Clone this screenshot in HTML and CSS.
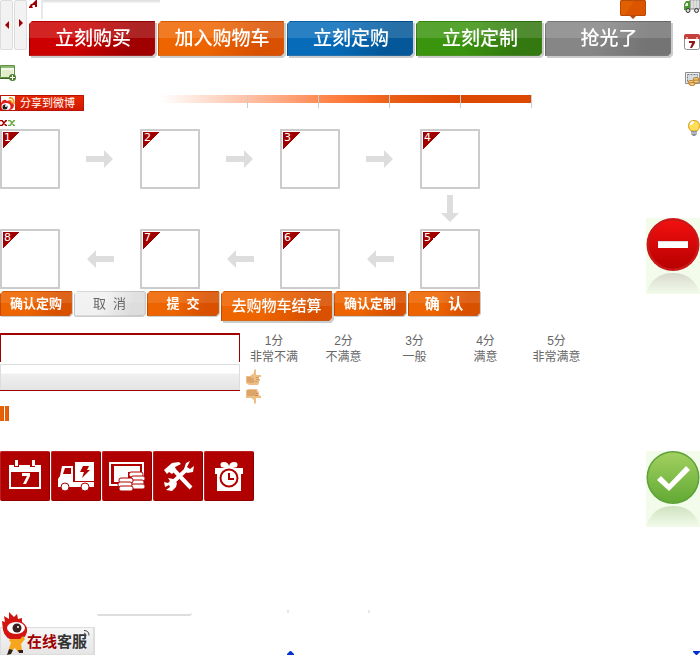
FILE: index.html
```html
<!DOCTYPE html>
<html lang="zh-CN">
<head>
<meta charset="utf-8">
<title>商城界面元素</title>
<link rel="stylesheet" href="styles.css">
</head>
<body>
<div class="page">
<main class="main">
  <header class="top">
    <div class="pager">
      <button class="page-btn" aria-label="上一页"><svg width="4" height="8"><path d="M4 0v8L0 4z" fill="#a00000"/></svg></button>
      <button class="page-btn next" aria-label="下一页"><svg width="4" height="8"><path d="M0 0v8l4-4z" fill="#a00000"/></svg></button>
    </div>
    <div class="top-body">
      <div class="strip">
        <svg class="flag" width="8" height="8"><path d="M8 0v7H6V5H4L3 6l1 2H0V7l2-3h1l4-4z" fill="#a00000"/></svg>
        <div class="corner"></div>
        <svg class="bubble" width="26" height="19"><path d="M1 0h24l1 1v14l-1 1h-9l-3 3-3-3H1l-1-1V1z" fill="#b94a08"/><path d="M1 1h24v14H1z" fill="#e06000"/><path d="M14 1h11v14H5z" fill="#dc5400"/></svg>
      </div>
      <div class="actions">
        <button class="btn big red">立刻购买</button>
        <button class="btn big orange">加入购物车</button>
        <button class="btn big blue">立刻定购</button>
        <button class="btn big green">立刻定制</button>
        <button class="btn big grey">抢光了</button>
      </div>
    </div>
  </header>

  <svg class="add" width="16" height="16"><path d="M.5.5h14v12H.5z" fill="#f4f8ea" stroke="#5f9140"/><path d="M1 1h13v2H1z" fill="#8cb878"/><path d="M2 5h11v7H2z" fill="#e3edcc"/><path d="M0 13.500h10" stroke="#3d6a25" stroke-width="1"/><circle cx="12.500" cy="12.500" r="3.500" fill="#4d7e2d"/><path d="M10 12.500h5M12.500 10v5" stroke="#fff" stroke-width="1"/></svg>

  <div class="share-row">
    <button class="share"><svg width="14" height="14"><path d="M0 0h14v14H0z" fill="#fff"/><path d="M0 7q2-4 5-3l1 1q4-2 5 1l2 3q0 5-6 5H0z" fill="#e02020"/><ellipse cx="5" cy="10.500" rx="4.500" ry="3.500" fill="#fff"/><circle cx="4" cy="11" r="2.500" fill="#1c1c1c"/><circle cx="5" cy="10" r="1" fill="#fff"/><path d="M8 2q5-1 5 6M8 4.500q3 0 3 3" fill="none" stroke="#f09a20" stroke-width="1.500"/></svg>分享到微博</button>
    <div class="scale"><i></i><i></i><i></i><i></i><i></i></div>
  </div>

  <div class="marks">
    <svg width="7" height="6"><path d="M0 .5h2L6 5.500h1M0 5.500h2L6 .5h1" fill="none" stroke="#a00000" stroke-width="1.500"/></svg>
    <svg width="7" height="6"><path d="M0 .5h2L6 5.500h1M0 5.500h2L6 .5h1" fill="none" stroke="#6aaa45" stroke-width="1.500"/></svg>
  </div>

  <div class="steps">
    <div class="step"><b>1</b></div><i class="arrow"></i>
    <div class="step"><b>2</b></div><i class="arrow"></i>
    <div class="step"><b>3</b></div><i class="arrow"></i>
    <div class="step"><b>4</b></div>
    <i class="arrow down"></i>
    <div class="step"><b>8</b></div><i class="arrow back"></i>
    <div class="step"><b>7</b></div><i class="arrow back"></i>
    <div class="step"><b>6</b></div><i class="arrow back"></i>
    <div class="step"><b>5</b></div>
  </div>

  <div class="forms">
    <button class="btn small orange">确认定购</button>
    <button class="btn small cancel">取&nbsp; 消</button>
    <button class="btn small orange">提&nbsp; 交</button>
    <button class="btn checkout orange">去购物车结算</button>
    <button class="btn small orange">确认定制</button>
    <button class="btn small confirm orange">确&nbsp; 认</button>
  </div>

  <section class="review">
    <div class="panels">
      <div class="panel-top"></div>
      <div class="panel-bottom"></div>
    </div>
    <div class="review-side">
      <div class="ratings">
        <span>1分<br>非常不满</span><span>2分<br>不满意</span><span>3分<br>一般</span><span>4分<br>满意</span><span>5分<br>非常满意</span>
      </div>
      <div class="thumbs">
        <svg width="16" height="16"><path d="M0 7h4l4-3V1l1-1 1 1v5h5v2h-2v2h1v2h-1v2l-1 2H3l-3-2z" fill="#edbf85"/><path d="M1 8h4l3 2v4H4l-3-1z" fill="#dca468"/><path d="M10 8.500h3M10 10.500h3M9 12.500h3" stroke="#cf9a5e"/></svg>
        <svg width="16" height="16"><path d="M0 1l3-1h8l1 2 1 2v2l2 1v2h-5v5l-1 1-1-1v-3L5 9H0z" fill="#edbf85"/><path d="M1 1h9l1 3-3 3H1z" fill="#dca468"/><path d="M10 4.500h2M9 6.500h3" stroke="#c48650"/></svg>
      </div>
    </div>
  </section>

  <div class="ends"><i></i><i></i></div>

  <div class="services">
    <div class="tile"><svg viewBox="0 0 50 50"><path d="M9 14h5v2h5v-2h11v2h5v-2h6v24H9zm2 7v15h28V21z" fill="#fff" fill-rule="evenodd"/><path d="M15 9h3v6h-3zM32 9h3v6h-3z" fill="#fff"/><path d="M22 22h8v3l-4 8h-3l4-8h-5z" fill="#fff"/></svg></div>
    <div class="tile"><svg viewBox="0 0 50 50"><path d="M24 11h19v19H24z" fill="#fff"/><path d="M11 15h11v16h21v5H7v-8l2-3z" fill="#fff"/><path d="M14 17h6v6h-8z" fill="#b00000"/><path d="M32 15h6l-2 4h3l-8 8 2-6h-4z" fill="#b00000"/><circle cx="14" cy="36" r="4" fill="#fff" stroke="#b00000"/><circle cx="34" cy="36" r="4" fill="#fff" stroke="#b00000"/></svg></div>
    <div class="tile"><svg viewBox="0 0 50 50"><path d="M7 11h35v24H7zm2 2v20h31V13z" fill="#fff" fill-rule="evenodd"/><path d="M12 15h26v6H26v6h-8v4h-6z" fill="#fff"/><g fill="#fff" stroke="#b00000"><rect x="27" y="21" width="14" height="5" rx="2"/><rect x="29" y="25" width="14" height="5" rx="2"/><rect x="28" y="29" width="14" height="5" rx="2"/><rect x="29" y="33" width="14" height="5" rx="2"/><rect x="17" y="27" width="14" height="5" rx="2"/><rect x="16" y="31" width="14" height="5" rx="2"/><rect x="17" y="35" width="14" height="5" rx="2"/></g></svg></div>
    <div class="tile"><svg viewBox="0 0 50 50"><path d="M20 18l18 19M34 18L17 34" stroke="#fff" stroke-width="4"/><path d="M11 19l8-7 7-1 2 2-6 3 1 3-4 4-3-2-2 2z" fill="#fff"/><path d="M37 10l-4 2-2 6 3 4 6-1 1-6-4 3-3-2zM11 31l4 1 2-2-2-3 5 1 4 4-1 4-4 4-6-1 4-3-1-2-4 2z" fill="#fff"/></svg></div>
    <div class="tile"><svg viewBox="0 0 50 50"><path d="M11 17h10l-4-1q-2-5 3-5 4 0 5 4 1-4 5-4 5 0 3 5l-4 1h10v6h-2v17H13V23h-2z" fill="#fff"/><circle cx="25" cy="27" r="8.500" fill="#fff" stroke="#b00000" stroke-width="2"/><path d="M25 22v6h5" fill="none" stroke="#b00000" stroke-width="2"/></svg></div>
  </div>

  <footer class="foot">
    <a class="chat" href="#">
      <svg class="mascot" width="30" height="43"><path d="M3 18L2 9l3 1-1-6 5 3 0-7 5 5 3-3 1 5 4-1 0 4q6 4 5 10-2 8-11 8-11 0-13-10z" fill="#d21510"/><ellipse cx="16" cy="16" rx="9" ry="6" fill="#fff"/><circle cx="17" cy="16" r="4.500" fill="#3a2020"/><circle cx="18" cy="15" r="1" fill="#fff"/><path d="M11 27h9l3-3 2 3-4 5 1 6-4 2-3-4-4 3-2-3 2-5-2-3z" fill="#f7a51c"/><path d="M9 37l4 1-2 4-4 1zM18 38h5v3h-4z" fill="#302018"/></svg>
      <span class="chat-label"><em>在线</em>客服</span>
      <svg class="signal" width="6" height="6"><path d="M0 .5q5 0 5 5M0 3q2 0 2 3" fill="none" stroke="#444"/></svg>
    </a>
    <div class="lip"></div>
    <div class="foot-mid"><i class="dot"></i><svg width="7" height="4"><path d="M3 0h1l3 3v1H0V3z" fill="#0033cc"/></svg></div>
    <i class="dot"></i>
    <svg class="drop" width="7" height="4"><path d="M0 0h7v1L4 4H3L0 1z" fill="#0033cc"/></svg>
  </footer>
</main>

<aside class="rail">
  <div class="rail-icons">
    <svg width="16" height="13"><path d="M6 0h10v9H6z" fill="#c9ccc9" stroke="#888"/><path d="M8 0v8M11 0v8M14 0v8" stroke="#f1f1f1"/><path d="M0 8V4l2-3h4v9H0z" fill="#4d9a30"/><path d="M2 3h2v3H1z" fill="#e7f4e5"/><circle cx="4" cy="10.500" r="2" fill="#ddd" stroke="#333"/><circle cx="12.500" cy="10.500" r="2" fill="#ddd" stroke="#333"/></svg>
    <svg width="16" height="16"><rect x=".5" y="1.500" width="15" height="14" rx="2" fill="#fff" stroke="#8b8f98"/><path d="M0 2q0-2 2-2h12q2 0 2 2v3H0z" fill="#c5403c"/><path d="M3 3v3M13 3v3" stroke="#fff"/><path d="M5 7h6v2l-3 5H6l2-5H5z" fill="#901818"/></svg>
    <svg width="16" height="15"><path d="M1.500 1.500h14v11h-14z" fill="#eee" stroke="#8d8d8d"/><path d="M3.500 3.500h10v7h-10z" fill="#d6dde2" stroke="#737d86" stroke-dasharray="2 1"/><g fill="#f5cf80" stroke="#bd8230"><ellipse cx="12" cy="8" rx="3" ry="1.500"/><ellipse cx="12" cy="10.500" rx="3" ry="1.500"/><ellipse cx="7" cy="11" rx="3" ry="1.500"/><ellipse cx="8" cy="13" rx="3" ry="1.500"/></g></svg>
    <svg class="bulb" width="12" height="16"><path d="M3 11Q0 8 .5 5.500Q1 .5 6 .5t5.500 5Q12 8 9 11z" fill="#ffdf55" stroke="#d69b25"/><path d="M3 5q0-3 3-3" fill="none" stroke="#fff" stroke-width="2"/><path d="M3 11h6v3l-2 2H5l-2-2z" fill="#8e9198"/><path d="M3 13h6" stroke="#ddd"/></svg>
  </div>
  <div class="status"><svg width="54" height="76"><defs><linearGradient id="r" x2="0" y2="1"><stop stop-color="#f21010"/><stop offset="1" stop-color="#b80000"/></linearGradient><linearGradient id="fade" x2="0" y2="1"><stop stop-color="#d8d9ce"/><stop offset="1" stop-color="#f3fceb"/></linearGradient></defs><path d="M0 76Q6 55 27 55t27 21z" fill="url(#fade)"/><circle cx="27" cy="26.500" r="26.500" fill="#c81818"/><circle cx="27" cy="26.500" r="24" fill="url(#r)"/><path d="M12 23h30v7H12z" fill="#fff"/><path d="M12 23.500h30" stroke="#ddd"/></svg></div>
  <div class="status ok"><svg width="54" height="76"><defs><linearGradient id="g" x2="0" y2="1"><stop stop-color="#a2d060"/><stop offset="1" stop-color="#62aa35"/></linearGradient><linearGradient id="fade2" x2="0" y2="1"><stop stop-color="#cee2bf"/><stop offset="1" stop-color="#f3fceb"/></linearGradient></defs><path d="M0 76Q6 55 27 55t27 21z" fill="url(#fade2)"/><circle cx="27" cy="26.500" r="26.500" fill="#5da138"/><circle cx="27" cy="26.500" r="25" fill="url(#g)"/><path d="M11 29l4-4 8 8 17-18 4 4-21 21z" fill="#fff"/></svg></div>
</aside>
</div>
</body>
</html>
```

FILE: styles.css
```css
* { box-sizing: border-box; }
body {
  margin: 0;
  background: #fff;
  font: 12px/16px "Liberation Sans", "Noto Sans CJK SC", sans-serif;
  color: #666;
}
svg { display: block; flex: none; }
button { margin: 0; border: 0; font-family: inherit; cursor: pointer; }
.page { display: grid; grid-template-columns: 1fr; min-height: 100vh; }
.main, .rail { grid-area: 1 / 1; }
.main { display: flex; flex-direction: column; align-items: flex-start; }

.top { display: flex; gap: 2px; width: 100%; }
.pager { display: flex; gap: 1px; flex: none; }
.page-btn {
  width: 13px; height: 50px; padding: 0;
  display: flex; align-items: center; justify-content: center;
  background: #f2f2f2; border: 1px solid #ddd; border-radius: 2px;
}
.next { padding-bottom: 4px; }
.top-body { flex: 1; min-width: 0; }
.strip { display: flex; height: 21px; }
.corner {
  width: 119px; height: 19px; margin-left: 4px;
  border-left: 2px solid #e8e8e8;
  background: linear-gradient(#ddd, #f5f5f5 3px, #fff 3px);
}
.bubble { margin-left: 460px; }
.actions { display: flex; gap: 3px; }

.btn {
  position: relative; z-index: 0; flex: none; padding: 0;
  background: none; color: #fff; white-space: nowrap;
  filter: drop-shadow(1px 1px 0 #ccc);
}
.btn::before {
  content: ""; position: absolute; inset: 0; z-index: -1;
  clip-path: polygon(3px 0, 100% 0, 100% calc(100% - 3px), calc(100% - 3px) 100%, 0 100%, 0 3px);
  border: 1px solid rgba(0, 0, 0, .1);
  background: linear-gradient(rgba(255, 255, 255, .1) 50%, transparent 50%), linear-gradient(110deg, var(--from) 40%, var(--to) 80%);
}
.big { width: 126px; height: 35px; padding: 1px 0 0 2px; font-size: 19px; line-height: 34px; font-weight: 500; filter: drop-shadow(2px 2px 0 #ccc); }
.big::before { background: linear-gradient(rgba(255, 255, 255, .14) 50%, transparent 50%), linear-gradient(110deg, var(--from) 40%, var(--to) 80%); }
.red { --from: #cc0000; --to: #a00000; }
.orange { --from: #ee6500; --to: #d95000; }
.blue { --from: #066bb8; --to: #045798; }
.green { --from: #3b940d; --to: #337810; }
.grey { --from: #868686; --to: #747474; }

.add { margin-top: 9px; }
.share-row { display: flex; width: 100%; margin-top: 14px; }
.share {
  display: flex; align-items: center; gap: 5px; flex: none;
  width: 84px; height: 16px; padding: 0 1px;
  border-radius: 1px; box-shadow: inset 0 0 0 1px #b91405;
  background: linear-gradient(#e82800, #d01800);
  color: #fff; font-size: 11px; line-height: 14px; white-space: nowrap;
}
.scale {
  display: grid; grid-template-columns: 88px repeat(4, 71px); height: 13px; margin-left: 76px;
  background: linear-gradient(90deg, #fff, #ffb899 100px, #ff7c3c 180px, #e85a12 240px, #dc4800 300px) top / 100% 8px no-repeat;
}
.scale i { border-right: 1px solid #ccc; }
.marks { display: flex; gap: 1px; margin-top: 9px; }

.steps {
  display: grid; margin-top: 3px;
  grid-template-columns: 60px 80px 60px 80px 60px 80px 60px;
  grid-template-rows: 60px 40px 60px;
  place-items: center;
}
.step { width: 60px; height: 60px; padding: 1px; border: 2px solid #ccc; }
.step b {
  display: block; width: 17px; height: 17px; padding-left: 1px;
  background: linear-gradient(135deg, #a00000 50%, transparent 50%);
  color: #fff; font: 11px/11px "DejaVu Sans", sans-serif;
}
.arrow {
  width: 28px; height: 18px; background: #ddd;
  clip-path: polygon(0 6px, 18px 6px, 18px 0, 27px 9px, 18px 18px, 18px 12px, 0 12px);
}
.back { transform: scaleX(-1); }
.down { grid-column: 7; transform: rotate(90deg); }

.forms { display: flex; gap: 2px; margin-top: 2px; align-items: flex-start; }
.small { width: 72px; height: 25px; font-size: 13px; line-height: 25px; font-weight: 700; }
.cancel { width: 71px; --from: #f1f1f1; --to: #ddd; color: #666; font-weight: 400; }
.checkout { width: 111px; height: 30px; font-size: 15px; line-height: 30px; font-weight: 500; filter: drop-shadow(2px 2px 0 #ccc); }
.confirm { font-size: 15px; }

.review { display: flex; width: 100%; height: 73px; margin-top: 12px; }
.panels { width: 240px; flex: none; align-self: flex-start; border-bottom: 1px solid #a00000; }
.panel-top { height: 29px; border: 1px solid #a00000; border-width: 2px 1px 0; border-radius: 1px 1px 0 0; }
.panel-bottom {
  height: 26px; margin-top: 2px;
  border: 1px solid #ddd; border-bottom: 0;
  background: linear-gradient(#fff 8px, #f0f0f0 9px, #e4e4e4);
}
.ratings { display: grid; grid-template-columns: 68px repeat(4, 71px); text-align: center; }
.thumbs { display: grid; gap: 4px; padding: 4px 0 0 6px; }
.ends { display: flex; gap: 1px; }
.ends i { width: 4px; height: 15px; background: #e86000; border-right: 1px solid #d45c14; }

.services { display: flex; gap: 1px; margin-top: 30px; }
.tile {
  width: 50px; height: 50px;
  background: #b00000; border: 1px solid #bc1d22; border-right-color: #8c0000; border-bottom-color: #8c0000;
  border-radius: 2px;
}
.tile svg { margin: -1px; width: 50px; height: 50px; }

.foot { display: flex; width: 100%; height: 45px; margin-top: auto; }
.chat { position: relative; display: flex; align-items: flex-end; width: 95px; height: 45px; flex: none; text-decoration: none; }
.chat::before {
  content: ""; position: absolute; inset: 17px 0 0;
  background: linear-gradient(#f6f6f6, #e5e5e5); border: 1px solid #ddd; border-right-width: 2px;
}
.mascot, .chat-label { position: relative; }
.mascot { margin-right: -3px; }
.chat-label { font-size: 15px; line-height: 26px; font-weight: 700; color: #333; white-space: nowrap; }
.chat-label em { color: #a00000; font-style: normal; }
.signal { position: absolute; right: 5px; top: 20px; }
.lip { width: 95px; height: 3px; margin: 3px 0 0 2px; border-bottom: 2px solid #ddd; border-radius: 0 0 3px 2px; }
.foot-mid { display: flex; flex-direction: column; justify-content: space-between; width: 81px; margin-left: 95px; }
.dot { width: 2px; height: 3px; background: #e8e8e8; }
.drop { margin: auto 0 0 auto; }

.rail { justify-self: end; display: flex; flex-direction: column; align-items: flex-end; }
.rail-icons { display: grid; justify-items: end; gap: 21px; height: 218px; align-content: start; }
.bulb { margin-top: 13px; }
.status { width: 54px; height: 76px; background: #f3fceb; }
.ok { margin-top: 157px; }
```
